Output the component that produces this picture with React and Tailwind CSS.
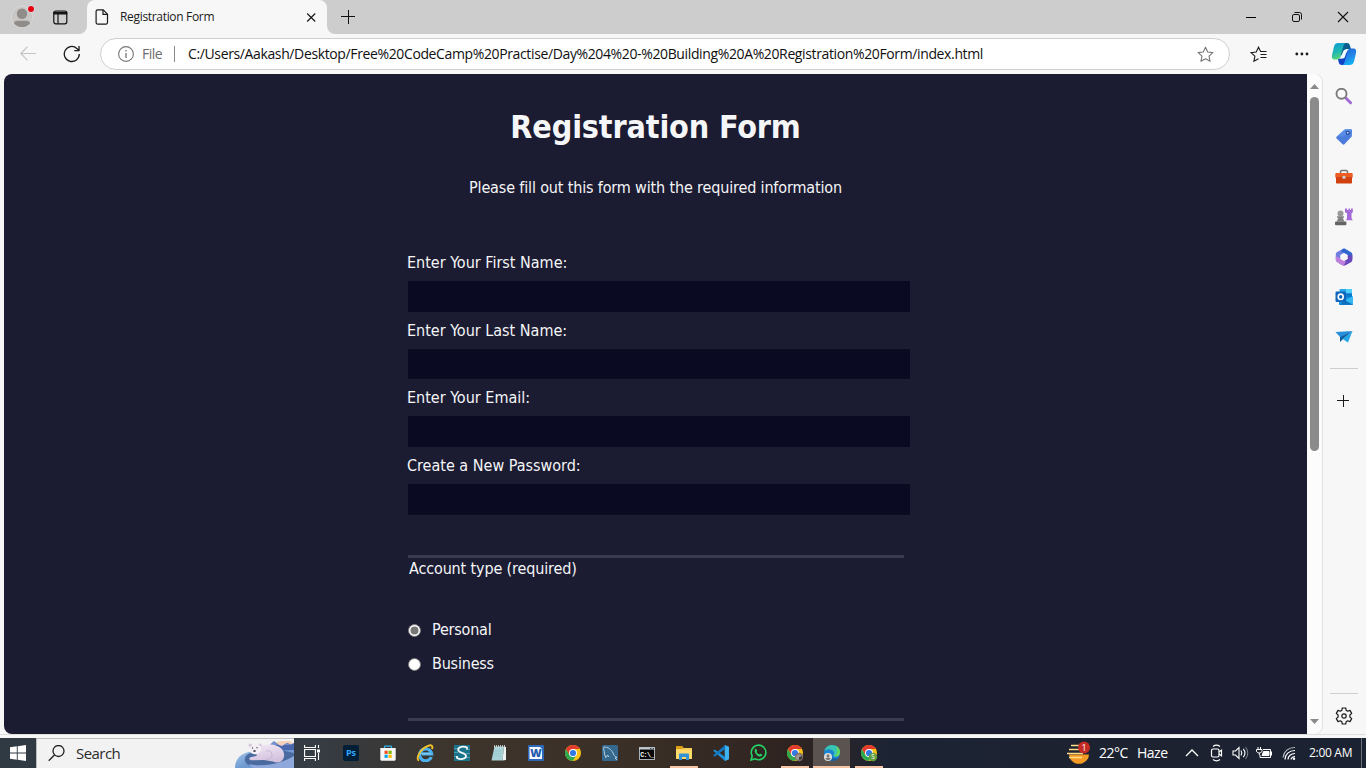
import React from "react";

const UI = "font-['Open_Sans','Noto_Sans',sans-serif]";
const FORM = "font-['DejaVu_Sans_Condensed','DejaVu_Sans',sans-serif] [font-stretch:condensed]";

/* ---------- Title bar ---------- */

function TitleBar() {
  return (
    <header className="flex h-[34px] shrink-0 items-stretch bg-[#cdcdcd]">
      <div className="flex w-[87px] bg-[#f7f7f7]">
        <div className="flex w-[87px] items-center rounded-br-lg bg-[#cdcdcd]">
          <svg className="ml-[10px] h-[26px] w-[26px]" viewBox="0 0 26 26">
            <circle cx="12" cy="13" r="10.7" fill="#c9c7c5" stroke="#dad8d6" strokeWidth="1" />
            <circle cx="12" cy="9.8" r="5.2" fill="#8f8c89" />
            <path d="M4 19.6c0-2 1.5-2.8 3.2-2.8h9.6c1.700 0 3.200.8 3.200 2.800a10.500 10.500 0 0 1-16 0z" fill="#8f8c89" />
            <circle cx="21" cy="5" r="3.600" fill="#e3e3e3" />
            <circle cx="21" cy="5" r="3" fill="#e60012" />
          </svg>
          <svg className="ml-[17px] h-[15px] w-[15px]" viewBox="0 0 15 15" fill="none" stroke="#111" strokeWidth="1.200">
            <rect x="0.800" y="1" width="13" height="12.800" rx="2" />
            <path d="M1 2.300h12.600v1.500H1z" fill="#111" />
            <path d="M5 4v9.800" />
          </svg>
        </div>
      </div>
      <div className="flex w-[240px] bg-[#cdcdcd]">
        <div className="flex w-[240px] items-center rounded-t-lg bg-[#f7f7f7]">
          <svg className="ml-[8px] h-[16px] w-[14px]" viewBox="0 0 14 16" fill="none" stroke="#1a1a1a" strokeWidth="1.200">
            <path d="M2.600 0.800h5.600l4.300 4.400v8.400a1.500 1.500 0 0 1-1.500 1.500H2.600a1.500 1.500 0 0 1-1.500-1.500V2.300a1.500 1.500 0 0 1 1.500-1.500z" />
            <path d="M8 1v4.400h4.400" />
          </svg>
          <span className={`${UI} ml-[11px] w-[180px] text-[12px] leading-4 tracking-[-0.320px] whitespace-nowrap text-[#1b1b1b]`}>Registration Form</span>
          <svg className="ml-[6px] h-[10px] w-[10px]" viewBox="0 0 10 10" stroke="#111" strokeWidth="1.100">
            <path d="M1.200 1.500l8 8M9.200 1.500l-8 8" />
          </svg>
        </div>
      </div>
      <div className="flex flex-1 bg-[#f7f7f7]">
        <div className="flex flex-1 items-center rounded-bl-lg bg-[#cdcdcd]">
          <svg className="ml-[14px] h-[14px] w-[14px]" viewBox="0 0 14 14" stroke="#111" strokeWidth="1">
            <path d="M0 6.500h14M7.500 0v14" />
          </svg>
        </div>
      </div>
      <div className="flex w-[138px] items-center">
        <span className="flex w-[46px] justify-center">
          <svg className="h-[12px] w-[12px]" viewBox="0 0 12 12" stroke="#000"><path d="M1 6.500h10" /></svg>
        </span>
        <span className="flex w-[46px] justify-center">
          <svg className="h-[12px] w-[12px]" viewBox="0 0 12 12" fill="none" stroke="#111">
            <rect x="1.500" y="3.500" width="7" height="7" rx="1.500" />
            <path d="M3.500 1.500h5a2 2 0 0 1 2 2v5" />
          </svg>
        </span>
        <span className="flex w-[46px] justify-center">
          <svg className="h-[12px] w-[12px]" viewBox="0 0 12 12" stroke="#111" strokeWidth="1.100"><path d="M1 1l10 10M11 1L1 11" /></svg>
        </span>
      </div>
    </header>
  );
}

/* ---------- Address bar ---------- */

const STAR = "M8.500 1.200l2.200 4.800 5.200.6-3.900 3.500 1.100 5.200-4.600-2.600-4.600 2.600 1.100-5.200L1.100 6.600l5.200-.6z";

function CopilotLogo() {
  return (
    <svg className="h-[24px] w-[26px]" viewBox="0 0 26 24">
      <defs>
        <linearGradient id="cpA" x1="0" y1="0" x2="0.300" y2="1">
          <stop offset="0" stopColor="#0d98d8" />
          <stop offset="0.600" stopColor="#20b9b0" />
          <stop offset="1" stopColor="#57d57c" />
        </linearGradient>
        <linearGradient id="cpB" x1="0.200" y1="0" x2="0.600" y2="1">
          <stop offset="0" stopColor="#1d66d5" />
          <stop offset="0.500" stopColor="#2483e8" />
          <stop offset="1" stopColor="#12b5f4" />
        </linearGradient>
      </defs>
      <path d="M8 1h8c2 0 2.500 1 3 3l1 3h-5L9 15z" fill="#0a5f8f" />
      <path d="M18 23h-7c-2 0-3-1-3.400-3L7 17l5-1 5-8z" fill="#1344c4" />
      <path d="M7.500 1H15c-1.500 0-2 1-2.600 3L9.500 14.500C9 16.500 8 17.500 6 17.500H4c-3 0-3.500-2-3-4.500l2-8.500C3.700 2 5 1 7.500 1z" fill="url(#cpA)" />
      <path d="M18.500 23H11c1.500 0 2-1 2.600-3l2.900-10.500c.5-2 1.500-3 3.500-3h2c3 0 3.500 2 3 4.500l-2 8.500c-.7 2.500-2 3.500-4.500 3.500z" fill="url(#cpB)" />
      <path d="M13.500 7.800h3.400c-1 .4-1.200 1.200-1.500 2.200l-1.300 4.300c-.4 1.500-1 2.200-2.400 2.200H9.200c.8-.6 1-1.300 1.400-2.600l1.300-3.800c.3-1.200.800-1.700 1.600-2.300z" fill="#eefaff" />
    </svg>
  );
}

function AddressBar() {
  return (
    <div className="flex h-[40px] shrink-0 items-center bg-[#f7f7f7]">
      <svg className="ml-[20px] h-[16px] w-[16px]" viewBox="0 0 16 16" fill="none" stroke="#c4c4c4" strokeWidth="1.200">
        <path d="M16 7.500H1M7.500.7L.8 7.500l6.700 6.800" />
      </svg>
      <svg className="ml-[27px] h-[18px] w-[18px]" viewBox="0 0 18 18" fill="none" stroke="#1a1a1a" strokeWidth="1.300">
        <path d="M16.300 9A7.500 7.500 0 1 1 13.800 3.400L16 5.500M16 1v4.700h-4.700" />
      </svg>
      <div className="ml-[19px] flex h-[32px] w-[1130px] items-center rounded-full border border-[#cfcfcf] bg-white">
        <svg className="ml-[17px] h-[16px] w-[16px]" viewBox="0 0 16 16" fill="none" stroke="#767676" strokeWidth="1.100">
          <circle cx="8" cy="8" r="7.400" />
          <path d="M8 7v5M8 4v1.500" strokeWidth="1.300" />
        </svg>
        <span className={`${UI} ml-[8px] w-[22px] text-[14px] leading-5 tracking-[-0.500px] whitespace-nowrap text-[#6e6e6e]`}>File</span>
        <span className="ml-[10px] h-[16px] w-px bg-[#8a8a8a]" />
        <span className={`${UI} ml-[13px] flex-1 text-[14px] leading-5 tracking-[-0.372px] whitespace-nowrap text-[#101010]`}>
          C:/Users/Aakash/Desktop/Free%20CodeCamp%20Practise/Day%204%20-%20Building%20A%20Registration%20Form/index.html
        </span>
        <svg className="mr-[15px] h-[17px] w-[17px]" viewBox="0 0 17 17" fill="none" stroke="#767676" strokeWidth="1.100" strokeLinejoin="round">
          <path d={STAR} />
        </svg>
      </div>
      <svg className="ml-[20px] h-[17px] w-[17px]" viewBox="0 0 17 17" fill="none" stroke="#1a1a1a" strokeWidth="1.100">
        <path d="M8.500 12.700l-4.600 2.600 1-5.200L1 6.600l5.200-.6 2.300-4.800L10.600 5.500H16.500M10.500 8.500h6M10.500 11.500h6" />
      </svg>
      <svg className="ml-[28px] h-[4px] w-[14px]" viewBox="0 0 14 4" fill="#1a1a1a">
        <circle cx="1.800" cy="2" r="1.400" /><circle cx="6.900" cy="2" r="1.400" /><circle cx="12" cy="2" r="1.400" />
      </svg>
      <span className="ml-[22px]"><CopilotLogo /></span>
    </div>
  );
}

/* ---------- Page ---------- */

function Field({ label, type, className }) {
  return (
    <label className={`flex flex-col ${className}`}>
      <span className="-ml-[0.5px] block h-[24px] text-[16px] leading-6">{label}</span>
      <input type={type} className="mt-[6px] block min-h-0 w-[502px] flex-1 bg-[#0a0a23] outline-none" />
    </label>
  );
}

function Choice({ label, checked }) {
  return (
    <label className="flex h-[34px] items-center">
      <svg className="h-[13px] w-[13px]" viewBox="0 0 13 13">
        <circle cx="6.500" cy="6.500" r="6" fill="#fff" stroke="#767676" />
        {checked && <circle cx="6.500" cy="6.500" r="4" fill="#767676" />}
      </svg>
      <span className="ml-[11.5px] text-[16px] leading-6 tracking-[-0.200px]">{label}</span>
    </label>
  );
}

function Page() {
  return (
    <main className={`${FORM} flex w-[1303px] flex-col items-center overflow-hidden rounded-l-lg bg-[#1b1b32] text-[#f5f6f7]`}>
      <h1 className="mt-[33px] h-[40px] text-[32px] leading-10 font-bold tracking-[-0.150px] whitespace-nowrap">Registration Form</h1>
      <p className="mt-[29px] h-[24px] text-[16px] leading-6 tracking-[-0.150px] whitespace-nowrap">Please fill out this form with the required information</p>
      <form className="mt-[51px] flex w-[496px] flex-col">
        <Field label="Enter Your First Name:" type="text" className="h-[61px]" />
        <Field label="Enter Your Last Name:" type="text" className="mt-[7px] h-[60px]" />
        <Field label="Enter Your Email:" type="email" className="mt-[7px] h-[61px]" />
        <Field label="Create a New Password:" type="password" className="mt-[7px] h-[61px]" />
        <div className="mt-[40px] flex h-[166px] flex-col border-y-[3px] border-[#3b3b4f]">
          <span className="mt-px ml-[1.500px] h-[20px] text-[16px] leading-5 tracking-[-0.140px]">Account type (required)</span>
          <div className="mt-[34px] flex flex-col">
            <Choice label="Personal" checked />
            <Choice label="Business" />
          </div>
        </div>
      </form>
    </main>
  );
}

function Scrollbar() {
  return (
    <div className="flex w-[15px] flex-col items-center rounded-r-lg bg-[#fcfcfc] shadow-[1px_0_0_#e2e2e2]">
      <svg className="mt-[10px] h-[5px] w-[9px]" viewBox="0 0 9 5" fill="#8a8a8a"><path d="M0 5L4.500 0 9 5z" /></svg>
      <div className="mt-[8px] h-[354px] w-[9px] rounded-full bg-[#8b8b8b]" />
      <div className="flex-1" />
      <svg className="mb-[10px] h-[5px] w-[9px]" viewBox="0 0 9 5" fill="#8a8a8a"><path d="M0 0l4.500 5L9 0z" /></svg>
    </div>
  );
}

/* ---------- Edge sidebar ---------- */

function SideIcon({ children }) {
  return (
    <span className="flex h-[40px] items-center justify-center">
      <svg className="h-[18px] w-[18px]" viewBox="0 0 18 18">{children}</svg>
    </span>
  );
}

function Sidebar() {
  return (
    <aside className="flex w-[44px] flex-col pt-[3px]">
      <SideIcon>
        <path d="M11 10.200l4.600 4.600" stroke="#a36bd6" strokeWidth="3" strokeLinecap="round" />
        <circle cx="6.500" cy="5.800" r="5" fill="#fafafa" stroke="#7b7b7b" strokeWidth="1.900" />
      </SideIcon>
      <SideIcon>
        <path d="M10.500 1.200l5.200.1c.9 0 1.300.4 1.300 1.300l-.2 5.300c0 .5-.2.8-.5 1.100l-6.900 7.200c-.6.600-1.200.600-1.800 0l-6-5.700c-.6-.600-.6-1.200 0-1.800l7.700-7c.4-.3.700-.5 1.200-.5z" fill="#4c7cdc" />
        <path d="M10.500 1.200l5.200.1c.9 0 1.300.4 1.300 1.300L7 9 3 7.200l6.300-5.500c.4-.3.700-.5 1.200-.5z" fill="#639af0" opacity=".6" />
        <circle cx="12.700" cy="4.700" r="2" fill="#174392" /><circle cx="12.700" cy="4.700" r="0.900" fill="#dfeaff" />
      </SideIcon>
      <SideIcon>
        <path d="M5.500 5V3.800c0-.7.500-1.300 1.300-1.300h4.400c.8 0 1.300.6 1.300 1.300V5" fill="none" stroke="#757575" strokeWidth="1.500" />
        <rect x="0.300" y="5" width="17.400" height="5" rx="1" fill="#ee5d22" />
        <path d="M1 9h16v5.500c0 .7-.4 1-1 1H2c-.6 0-1-.3-1-1z" fill="#d0410f" />
        <circle cx="9" cy="9.300" r="1.600" fill="#c4d2d8" />
      </SideIcon>
      <SideIcon>
        <path d="M10 .5h2v1.500h1.500V.5H15v1.500h1V.5h1.800v3.700l-1.300 1v4.700l1.200 2.300h-6.500L12 9.700V5.200l-2-1z" fill="#a56ad8" />
        <circle cx="5.500" cy="5.400" r="3" fill="#999" />
        <path d="M2 8.200h7v1.600H7.800l1.500 3.600H1.800l1.500-3.600H2z" fill="#828282" />
        <rect x="0" y="13.500" width="11.400" height="3.700" rx="1" fill="#646464" />
      </SideIcon>
      <SideIcon>
        <path d="M8 .7L2.200 4C1.200 4.600.8 5.300.8 6.500V12l4.700 1.800V7.200L11 3.500z" fill="#6e7fe0" />
        <path d="M8 .7c.8-.4 1.700-.3 2.500.2L16 4.200c1 .6 1.300 1.200 1.300 2.300v4.800L12.600 9V7L8 4.500 6 3z" fill="#2f66cf" />
        <path d="M17.300 7v5c0 1-.4 1.700-1.300 2.200l-5.500 3.100c-1 .6-2 .6-3 0L4 15.300l3.500-2.600H9l3.600-2V7.500z" fill="#6a48bb" />
        <path d="M.8 8v4c0 1 .4 1.700 1.300 2.200l5.400 3.100c.4.200.9.400 1.300.4L11 13l-2-.2-3.500-2z" fill="#c07fdb" />
        <path d="M9 5l3.500 2v4L9 13l-3.500-2V7z" fill="#f7f7f7" />
      </SideIcon>
      <SideIcon>
        <path d="M6 1h10c.6 0 1 .4 1 1v6H4.500V2c0-.6.4-1 1-1z" fill="#28a8ea" />
        <path d="M11 1h5c.6 0 1 .4 1 1v3h-6z" fill="#50d0f8" />
        <path d="M5 5.500h12V10H5z" fill="#0a78cc" />
        <path d="M4 9h14v7c0 .6-.4 1-1 1H5c-.6 0-1-.4-1-1z" fill="#1490df" />
        <path d="M18 8v8.500L10 12.500z" fill="#35b8f1" />
        <path d="M10 12.500l7.800 4.200H5z" fill="#1070bd" />
        <rect x="0.500" y="3.500" width="10.500" height="10.500" rx="1.200" fill="#0f66bd" />
        <ellipse cx="5.700" cy="8.800" rx="2.500" ry="2.700" fill="none" stroke="#fff" strokeWidth="1.600" />
      </SideIcon>
      <SideIcon>
        <path d="M.5 4L17.500 3 5.500 9.500z" fill="#2690dc" />
        <path d="M17.500 3L5 9.300v4.700l3-3z" fill="#115a9b" />
        <path d="M17.500 3l-4.500 11.500L7.500 11z" fill="#27a6e8" />
      </SideIcon>
      <div className="mx-[8px] mt-[11px] h-px bg-[#cfcfcf]" />
      <span className="mt-[26px] flex justify-center pr-[2px]">
        <svg className="h-[12px] w-[12px]" viewBox="0 0 12 12" stroke="#1a1a1a"><path d="M0 5.500h12M6.500 0v12" /></svg>
      </span>
      <div className="flex-1" />
      <div className="mx-[8px] h-px bg-[#cfcfcf]" />
      <span className="mt-[13px] mb-[9px] flex justify-center">
        <svg className="h-[18px] w-[18px]" viewBox="0 0 18 18" fill="none" stroke="#1a1a1a" strokeWidth="1.200" strokeLinejoin="round">
          <path d="M7.300 1h3.400l.5 2.300 1.500.9 2.300-.8 1.700 3-1.800 1.600v2l1.800 1.600-1.700 3-2.300-.8-1.500.9-.5 2.300H7.300l-.5-2.300-1.500-.9-2.300.8-1.700-3L3.100 10V8L1.300 6.400l1.700-3 2.300.8 1.500-.9z" />
          <circle cx="9" cy="9" r="2.200" />
        </svg>
      </span>
    </aside>
  );
}

/* ---------- Taskbar ---------- */

function BearArt() {
  return (
    <svg className="h-[29px] w-[59px]" viewBox="0 0 59 29">
      <defs>
        <linearGradient id="ice" x1="0" y1="0" x2="1" y2="0.600">
          <stop offset="0" stopColor="#a9c8e8" /><stop offset="0.500" stopColor="#6d9bd2" /><stop offset="1" stopColor="#7f9ad6" />
        </linearGradient>
        <linearGradient id="sky" x1="0" y1="0" x2="0" y2="1">
          <stop offset="0" stopColor="#f7d3b4" /><stop offset="1" stopColor="#d9c3d8" />
        </linearGradient>
        <linearGradient id="fur" x1="0" y1="0" x2="0.300" y2="1">
          <stop offset="0" stopColor="#f3eaf4" /><stop offset="1" stopColor="#d3c1de" />
        </linearGradient>
      </defs>
      <path d="M34 8c4-4 8-6 13-6h8l4 3v9H34z" fill="url(#sky)" />
      <path d="M28 9l4-3 3 .5 4-4 5 3.500 3 1 5-3 4 1.500 3-1.500v12H30z" fill="#4a68ae" />
      <path d="M35 5.500l4-3.500 4 3.500-4 1.500zM49 6l3-2 4 2z" fill="#7590cc" />
      <path d="M0 29C0 19 7 13 19 12.500L59 11v18z" fill="url(#ice)" />
      <path d="M10 22c-1-5 3-8 9-8.500L50 12l9 2v6c-6 3-12 6-22 7H18c-4 0-7-2-8-5z" fill="#4a6b9f" />
      <path d="M14 25c12 3 30 1 45-8v12H19c-2-1-4-2-5-4z" fill="#8fa8dc" />
      <path d="M22 9c4-3 9-4 14-3.500 7 .5 12 4 13 9 .7 4-1 7-4 8.500-2 .8-5 .6-7-.6l-9-1.400-12 .3c-3 0-3.500-2-1.500-3l6-1.300z" fill="url(#fur)" />
      <path d="M31 12c4-1 6 1 6 4s-3 4.500-6 4" fill="none" stroke="#c3b0d2" strokeWidth=".8" />
      <circle cx="15.300" cy="6.300" r="1.700" fill="#d6c7dc" /><circle cx="25" cy="6.300" r="1.700" fill="#d6c7dc" />
      <path d="M14.500 9c1-4 10-5 11.500-1 1 3-1 6.500-5 7.300-4 .2-7.300-2.300-6.500-6.300z" fill="#f5eef5" />
      <circle cx="17.500" cy="9" r=".7" fill="#49455b" /><circle cx="22" cy="8.700" r=".7" fill="#49455b" /><ellipse cx="19.500" cy="12" rx="1.300" ry="1" fill="#49455b" />
    </svg>
  );
}

function Slot({ children, open, active }) {
  return (
    <span className={`flex h-[30px] w-[37px] flex-col items-center ${active ? "bg-[#5a534f]" : ""}`}>
      <svg className="mt-[6px] h-[18px] w-[18px]" viewBox="0 0 18 18">{children}</svg>
      {(open || active) && <span className={`mt-[4px] h-[2px] bg-[#f5c5a6] ${active ? "w-[37px]" : "w-[28px]"}`} />}
    </span>
  );
}

function ChromeMark() {
  return (
    <>
      <circle cx="9" cy="9" r="8" fill="#fbc116" />
      <path d="M2.070 5L5.540 11 9 9l3.460 2-3.800 6A8 8 0 0 1 2.070 5z" fill="#2da94f" />
      <path d="M2.070 5A8 8 0 0 1 15.930 5H9v4l-3.460 2z" fill="#e33b2e" />
      <circle cx="9" cy="9" r="4" fill="#fff" /><circle cx="9" cy="9" r="3.100" fill="#3279e6" />
    </>
  );
}

function Taskbar() {
  return (
    <footer className={`${UI} flex h-[30px] shrink-0 items-stretch bg-[linear-gradient(to_right,#303a43_0,#363c43_320px,#3d342b_460px,#3a2f26_640px,#2e2320_790px,#25242b_850px,#1c2434_890px,#1d2230_1080px,#1b2231_1366px)] text-white`}>
      <span className="flex w-[36px] items-center justify-center">
        <svg className="h-[16px] w-[16px]" viewBox="0 0 16 16" fill="#fff">
          <path d="M0 2.300l6.800-1v6.200H0zM7.700 1.200L16 0v7.500H7.700zM0 8.500h6.800v6.200l-6.800-1zM7.700 8.500H16V16l-8.300-1.200z" />
        </svg>
      </span>
      <div className="flex w-[258px] items-center border-t border-l border-[#bcbcbc] bg-[#f2f2f2] text-[#2b2b2b]">
        <svg className="ml-[11px] h-[17px] w-[17px]" viewBox="0 0 17 17" fill="none" stroke="#222" strokeWidth="1.300">
          <circle cx="10.500" cy="6" r="5.500" /><path d="M6.500 10L.7 15.800" />
        </svg>
        <span className="mb-[2px] ml-[11px] flex-1 text-[15px] leading-5 tracking-[-0.550px]">Search</span>
        <BearArt />
      </div>
      <span className="flex w-[38px] items-center justify-center pr-px">
        <svg className="h-[16px] w-[17px]" viewBox="0 0 17 16" fill="none" stroke="#fff" strokeWidth="1.100">
          <path d="M.6 0v2.500h10.800V0M.6 16v-2.500h10.800V16M.6 4.500h10.800v7H.6zM14.500 0v3M14.500 8v7" />
          <path d="M13 4.500h3v3h-3z" fill="#fff" stroke="none" />
        </svg>
      </span>

      <Slot>
        <rect x="1" y="1" width="16" height="16" rx="2" fill="#001e36" />
        <text x="9" y="12.300" textAnchor="middle" fontSize="9" fontWeight="700" fill="#31a8ff">Ps</text>
      </Slot>
      <Slot>
        <path d="M5.500 4.500V2.800c0-.4.300-.7.700-.7h5.600c.4 0 .7.300.7.700v1.700" fill="none" stroke="#31b6f2" strokeWidth="1.200" />
        <path d="M1.300 4h15.400v11.300c0 .9-.6 1.500-1.500 1.500H2.800c-.9 0-1.500-.6-1.500-1.500z" fill="#f6f6f6" />
        <path d="M5.500 6.700h3.200v3.200H5.500z" fill="#f25022" /><path d="M9.500 6.700h3.200v3.200H9.500z" fill="#7fba00" />
        <path d="M5.500 10.700h3.200v3.200H5.500z" fill="#00a4ef" /><path d="M9.500 10.700h3.200v3.200H9.500z" fill="#ffb900" />
      </Slot>
      <Slot>
        <path d="M15.300 13A6 6 0 1 1 15.600 9.800H6" fill="none" stroke="#4bb0ec" strokeWidth="3.200" />
        <path d="M4.500 9.800H15" stroke="#8fd6fb" strokeWidth="1" />
        <path d="M3 16.500C-1 15 4.500 4.500 12 1.800c3.500-1.300 5.200.2 4 3.200" fill="none" stroke="#f3c32c" strokeWidth="1.900" />
      </Slot>
      <Slot>
        <rect x="1" y="1" width="16" height="16" fill="#19738a" />
        <path d="M1 4.500h4M1 8.500h4M1 12.500h4M13 5.500h4M13 9.500h4M13 13.500h4" stroke="#5fa3b2" strokeWidth=".8" />
        <path d="M14 5.500V3.500C11 2 5 2.300 5.200 6c.2 3.500 7.800 2.200 7.800 6 0 3.500-6 3.700-9 2v-2" fill="none" stroke="#f2f7f8" strokeWidth="1.800" />
      </Slot>
      <Slot>
        <path d="M4.500 2.500H14l-1.500 14H1.500z" fill="#a9d3d6" /><path d="M14 2.500l2 .5v13l-3.500.5z" fill="#eef4f2" />
        <path d="M4.500 1v3M6.500 1v3M8.500 1v3M10.500 1v3M12.500 1v3M14.500 1v3" stroke="#d8dedf" strokeWidth=".8" />
        <path d="M5 7h7M4.500 9.500h7M4 12h7" stroke="#8abdc4" strokeWidth=".5" />
      </Slot>
      <Slot>
        <rect x="1" y="1" width="16" height="16" rx="1" fill="#2c67b8" />
        <path d="M2.500 3H13l2 2v10H2.500z" fill="#f4f8ff" />
        <text x="9" y="13" textAnchor="middle" fontSize="11" fontWeight="800" fill="#1f5bae">W</text>
      </Slot>
      <Slot><ChromeMark /></Slot>
      <Slot>
        <rect x="1" y="1" width="16" height="16" rx="1.500" fill="#35688d" />
        <path d="M5 14l-1.500-4c0-3-1.500-5-.5-7 4 0 7 2 9 6 .5 1.500 1 3 4 4.500l-2 .5 2 2M5.500 13l1-2 1.500 2" fill="none" stroke="#c0d9e9" strokeWidth=".9" />
      </Slot>
      <Slot>
        <rect x="1.500" y="3.500" width="15" height="12" fill="#070707" stroke="#a9b0b6" strokeWidth="1" />
        <path d="M1 4.500h16" stroke="#c5ccd0" strokeWidth="2" />
        <path d="M12 4.500h4" stroke="#456" strokeWidth="1" strokeDasharray="1 .5" />
        <text x="9" y="12.500" textAnchor="middle" fontSize="6.500" fontWeight="700" fill="#fff" fontFamily="Liberation Mono" letterSpacing="-.5">C:\_</text>
      </Slot>
      <Slot open>
        <path d="M1 2h6l1.500 2H17v11H1z" fill="#f7ca53" /><path d="M1 2h6l1.500 2L7 5H1z" fill="#dc9e18" />
        <path d="M1 5.500h16V15H1z" fill="#ffd96a" />
        <path d="M4 16v-5.500c0-.6.400-1 1-1h8c.6 0 1 .4 1 1V16h-3v-3H7v3z" fill="#3192d6" />
      </Slot>
      <Slot>
        <path d="M13 1l4 1.800v12.400L13 17 12.500 2z" fill="#3cb2ef" />
        <path d="M13 17L1.200 6.700l1.500-1.300L13.200 13z" fill="#1d8fd8" /><path d="M1.200 11.300l1.500 1.400L13.200 5V1z" fill="#1277be" />
      </Slot>
      <Slot>
        <path d="M2 16l1.200-4A7.300 7.300 0 1 1 6 14.800z" fill="none" stroke="#25d366" strokeWidth="1.600" />
        <path d="M6 5.200c.5-.6 1.200-.5 1.500.1l.6 1.400c.2.500-.6 1-.6 1.300.6 1.200 1.500 2 2.700 2.500.5-.2.800-1 1.300-.8l1.400.7c.6.400.3 1.300-.3 1.700C9.500 14 4.400 9 6 5.200z" fill="#25d366" />
      </Slot>
      <Slot open>
        <ChromeMark />
        <circle cx="13" cy="13" r="4.200" fill="#796e6d" /><path d="M10 12l3-2 3 2v3l-3 1-3-1z" fill="#a19796" /><path d="M13 13l3-1v3l-3 1z" fill="#413a3c" />
      </Slot>
      <Slot active>
        <circle cx="9" cy="9" r="8" fill="#1a82d2" />
        <path d="M1.500 6.500C3 2.500 6 1 9 1c5 0 8 3.500 8 7 0 3-2 4.500-4.500 4.500-2 0-2.500-1-1.700-2C12 8 9.500 5.500 6.500 5.500c-2 0-4 .5-5 1z" fill="#38c3b3" />
        <path d="M13 2c3 1.500 4 4 4 6 0 3-2 4.500-4.500 4.500-1 0-1.700-.3-2-.7C15 11 15 6 13 2z" fill="#64d85f" />
        <path d="M7 9c-1 4 3 7 8.500 5C12 18 7.500 17.500 5 16z" fill="#165d9f" />
        <circle cx="5" cy="13" r="4" fill="#dfdedd" /><circle cx="5" cy="11.800" r="1.500" fill="#777" /><path d="M2.400 15c0-2 5.200-2 5.200 0-1.500 1.500-3.500 1.500-5.200 0z" fill="#777" />
      </Slot>
      <Slot open>
        <ChromeMark />
        <circle cx="13" cy="13" r="4.200" fill="#609d3d" />
        <text x="13" y="15.300" textAnchor="middle" fontSize="6.500" fill="#fff">S</text>
      </Slot>

      <div className="flex-1" />
      <svg className="mt-[3px] h-[24px] w-[26px]" viewBox="0 0 26 24">
        <path d="M3 13.500h20a10 9.500 0 0 1-19 4z" fill="#f39a25" />
        <path d="M5 4.500h10M3 8.500h15M1 12.500h16M3 16.500h13" stroke="#ffdc88" strokeWidth="1.600" />
        <circle cx="18" cy="6.500" r="6" fill="#c42b24" />
        <text x="18" y="9.800" textAnchor="middle" fontSize="9" fill="#fff">1</text>
      </svg>
      <span className="ml-[7px] w-[30px] self-center text-[14px] leading-5 tracking-[-0.500px] whitespace-nowrap">22°C</span>
      <span className="ml-[8px] w-[32px] self-center text-[14px] leading-5 tracking-[-0.500px]">Haze</span>
      <svg className="ml-[16px] h-[30px] w-[14px]" viewBox="0 0 14 30" fill="none" stroke="#fff" strokeWidth="1.300"><path d="M1 18l6-6 6 6" /></svg>
      <svg className="ml-[11px] h-[30px] w-[14px]" viewBox="0 0 14 30" fill="none" stroke="#fff" strokeWidth="1.200">
        <rect x="1.500" y="11" width="7.500" height="8" rx="1.500" /><path d="M9 14l2.500-1.800v5.600L9 16M3 8.500c2-1.500 5-1.500 7 0M3 21.500c2 1.500 5 1.500 7 0" />
      </svg>
      <svg className="ml-[8px] h-[30px] w-[17px]" viewBox="0 0 17 30" fill="none" stroke="#fff" strokeWidth="1.100">
        <path d="M1 13h2.500L7 9.500v11L3.500 17H1zM9 12.500c1 1.500 1 3.500 0 5M11.300 10.800c2 2.500 2 5.900 0 8.400" />
        <path d="M13.500 9c3 3.500 3 8.500 0 12" stroke="#77808c" />
      </svg>
      <svg className="ml-[7px] h-[30px] w-[17px]" viewBox="0 0 17 30" fill="none" stroke="#fff" strokeWidth="1">
        <path d="M7 11.500h7.500v8H4V17M15.500 13.500v4M.5 11.500h5.500v1.500c0 2.500-5.500 2.500-5.500 0zM2 9v2.500M4.500 9v2.500M3.300 15v2" /><path d="M7.500 13.500H13v4H6z" fill="#fff" />
      </svg>
      <svg className="ml-[9px] h-[30px] w-[15px]" viewBox="0 0 15 30" fill="none" strokeWidth="1.200">
        <path d="M1 19.500C2 13.500 6 9.500 13 9.500" stroke="#b5babf" /><path d="M3 21.500c0-5 4-9 10-9M6 21.500c0-3.500 3-6 7-6M9 21.500c0-1.500 2-3 4-3" stroke="#fff" /><circle cx="12" cy="20.700" r="1.200" fill="#fff" />
      </svg>
      <span className="ml-[12px] w-[44px] self-center text-[12px] leading-4 tracking-[-0.300px] whitespace-nowrap">2:00 AM</span>
      <span className="ml-[8px] mr-[4px] w-px bg-[#6a7078]" />
    </footer>
  );
}

export default function App() {
  return (
    <div className="flex h-[768px] w-[1366px] flex-col overflow-hidden bg-[#f7f7f7]">
      <TitleBar />
      <AddressBar />
      <div className="flex h-[660px] shrink-0 pl-[4px]">
        <Page />
        <Scrollbar />
        <Sidebar />
      </div>
      <div className="h-[4px] shrink-0 border-t border-[#dedede] bg-[#f7f7f7]" />
      <Taskbar />
    </div>
  );
}
